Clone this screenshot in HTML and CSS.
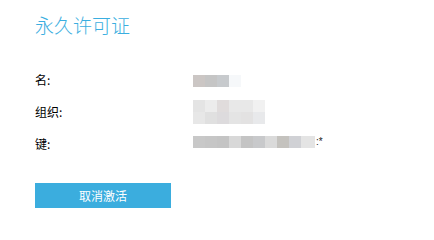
FILE: index.html
```html
<!DOCTYPE html>
<html lang="zh">
<head>
<meta charset="utf-8">
<link rel="stylesheet" href="styles.css">
</head>
<body>
<div class="page">
  <h1 class="title">永久许可证</h1>
  <div class="rows">
    <div class="row">
      <div class="label">名:</div>
      <div class="blur blur-name">
        <i style="background:#cbc6c4"></i><i style="background:#c5c5c5"></i><i style="background:#c7cacd"></i><i style="background:#f6f8fa"></i>
      </div>
    </div>
    <div class="row">
      <div class="label">组织:</div>
      <div class="blur blur-org">
        <i style="background:#e4e4e4"></i><i style="background:#ececec"></i><i style="background:#e0dcdc"></i><i style="background:#e8e8e8"></i><i style="background:#e8e8e8"></i><i style="background:#f1f1f1"></i>
        <i style="background:#e7e7e7"></i><i style="background:#e0e0e0"></i><i style="background:#dddbdd"></i><i style="background:#e4e4e4"></i><i style="background:#e3e2e2"></i><i style="background:#e8e9eb"></i>
      </div>
    </div>
    <div class="row">
      <div class="label">键:</div>
      <div class="key">
        <div class="blur blur-key">
          <i style="background:#c8c8c8"></i><i style="background:#c6c6c6"></i><i style="background:#c4c4c4"></i><i style="background:#d8d8d8"></i><i style="background:#c4c4c4"></i><i style="background:#c8c9cb"></i><i style="background:#dadada"></i><i style="background:#c4c2be"></i><i style="background:#d0d1d5"></i><i style="background:#e4e4e4"></i>
        </div>
        <span class="key-tail">:*</span>
      </div>
    </div>
  </div>
  <button class="btn" type="button">取消激活</button>
</div>
</body>
</html>
```
FILE: styles.css
```css
html, body {
  margin: 0;
  padding: 0;
  background: #ffffff;
}
body {
  font-family: "Noto Sans CJK SC", "Liberation Sans", sans-serif;
  color: #000;
}
.page {
  padding: 12px 35px 0 35px;
}
.title {
  margin: 0;
  font-size: 19px;
  font-weight: 300;
  line-height: 26px;
  color: #3aaee0;
}
.rows {
  margin-top: 26px;
}
.row {
  display: flex;
  align-items: center;
  height: 32px;
}
.label {
  width: 158px;
  font-size: 12px;
  line-height: 14px;
}
.blur {
  display: grid;
  grid-auto-rows: 12px;
}
.blur i {
  display: block;
}
.blur-name {
  grid-template-columns: repeat(4, 12px);
  margin-top: 2px;
}
.blur-org {
  grid-template-columns: repeat(6, 12px);
  margin-top: -1px;
}
.key {
  display: flex;
  align-items: center;
  margin-top: -4px;
}
.blur-key {
  grid-template-columns: repeat(9, 12px) 14px;
}
.key-tail {
  font-family: "Liberation Sans", sans-serif;
  font-size: 10px;
  line-height: 12px;
  margin-left: 1px;
  color: #222;
}
.btn {
  display: flex;
  align-items: center;
  justify-content: center;
  margin-top: 23px;
  width: 136px;
  height: 25px;
  padding: 0;
  border: 0;
  background: #3badde;
  color: #fff;
  font-family: "Noto Sans CJK SC", "Liberation Sans", sans-serif;
  font-size: 12px;
}
```
